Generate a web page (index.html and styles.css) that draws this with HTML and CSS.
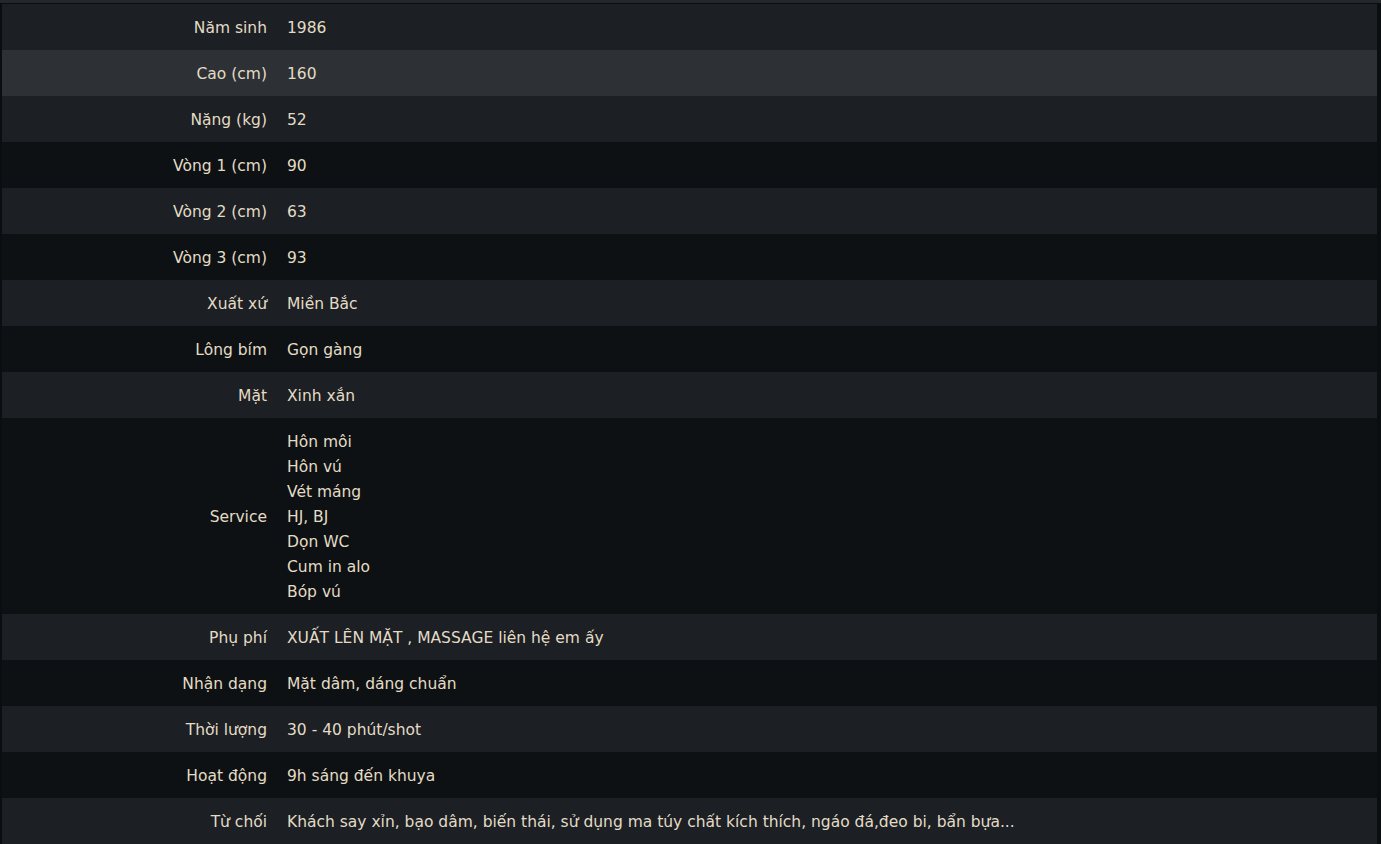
FILE: index.html
```html
<!DOCTYPE html>
<html lang="vi">
  <head>
    <meta charset="UTF-8" />
    <meta name="viewport" content="width=device-width, initial-scale=1.0" />
    <title>Thông tin</title>
    <link rel="stylesheet" href="styles.css">
  </head>
  <body>
    <div class="info-box">
      <table class="info-table">
        <tr><th>Năm sinh</th><td>1986</td></tr>
        <tr class="hover"><th>Cao (cm)</th><td>160</td></tr>
        <tr><th>Nặng (kg)</th><td>52</td></tr>
        <tr><th>Vòng 1 (cm)</th><td>90</td></tr>
        <tr><th>Vòng 2 (cm)</th><td>63</td></tr>
        <tr><th>Vòng 3 (cm)</th><td>93</td></tr>
        <tr><th>Xuất xứ</th><td>Miền Bắc</td></tr>
        <tr><th>Lông bím</th><td>Gọn gàng</td></tr>
        <tr><th>Mặt</th><td>Xinh xắn</td></tr>
        <tr>
          <th>Service</th>
          <td>Hôn môi<br>Hôn vú<br>Vét máng<br>HJ, BJ<br>Dọn WC<br>Cum in alo<br>Bóp vú</td>
        </tr>
        <tr><th>Phụ phí</th><td>XUẤT LÊN MẶT , MASSAGE liên hệ em ấy</td></tr>
        <tr><th>Nhận dạng</th><td>Mặt dâm, dáng chuẩn</td></tr>
        <tr><th>Thời lượng</th><td>30 - 40 phút/shot</td></tr>
        <tr><th>Hoạt động</th><td>9h sáng đến khuya</td></tr>
        <tr><th>Từ chối</th><td>Khách say xỉn, bạo dâm, biến thái, sử dụng ma túy chất kích thích, ngáo đá,đeo bi, bẩn bựa...</td></tr>
      </table>
    </div>
  </body>
</html>
```

FILE: styles.css
```css
body {
  margin: 0;
  background: #0b0e11;
  font-family: "DejaVu Sans", Tahoma, sans-serif;
  font-size: 15.5px;
  color: #e3dcc4;
}

.info-box {
  border-top: 3px solid #24272b;
  padding: 1px 4px 0 2px;
  background: #0b0e11;
}

.info-table {
  width: 100%;
  border-collapse: collapse;
}

.info-table th,
.info-table td {
  padding: 12px 10px 9px;
  line-height: 25px;
  vertical-align: middle;
}

.info-table th {
  width: 255px;
  text-align: right;
  font-weight: normal;
}

.info-table td {
  text-align: left;
}

.info-table tr:nth-child(odd) {
  background: #1c1f24;
}

.info-table tr:nth-child(even) {
  background: #0e1114;
}

.info-table tr.hover {
  background: #2d3136;
}
```
